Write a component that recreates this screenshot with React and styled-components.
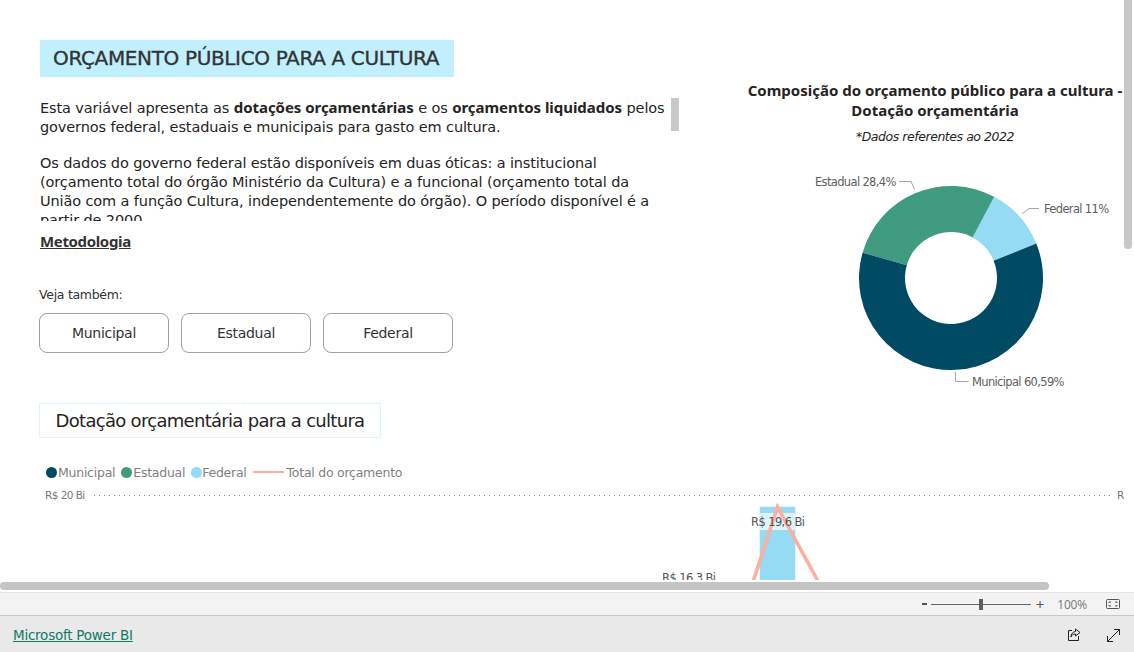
import React from "react";
import styled, { createGlobalStyle } from "styled-components";

const FONT = `"DejaVu Sans", "Noto Sans", sans-serif`;
const BOLD = `"Noto Sans", "DejaVu Sans", sans-serif`;

const Global = createGlobalStyle`
  html, body { margin: 0; padding: 0; background: #fff; overflow: hidden; }
  * { box-sizing: border-box; }
  body { font-family: ${FONT}; color: #252423; }
`;

const Page = styled.div`
  width: 1134px;
  height: 652px;
  display: flex;
  flex-direction: column;
  overflow: hidden;
`;
const Canvas = styled.main`
  position: relative;
  height: 592px;
  overflow: hidden;
  background: #fff;
`;
const Clip = styled.div`
  height: 580px;
  overflow: hidden;
  display: flex;
  flex-direction: column;
`;
const TopRow = styled.div`
  display: grid;
  grid-template-columns: 700px 434px;
  height: 403px;
`;
const LeftCol = styled.section`
  padding: 40px 0 0 40px;
  display: flex;
  flex-direction: column;
  align-items: flex-start;
`;
const MainTitle = styled.h1`
  margin: 0;
  width: 414px;
  height: 37px;
  padding-left: 13px;
  background: #c1efff;
  color: #333;
  font-size: 20px;
  font-weight: 400;
  letter-spacing: -0.35px;
  -webkit-text-stroke: 0.35px #333;
  line-height: 36px;
  white-space: nowrap;
`;
const TextBox = styled.div`
  position: relative;
  margin-top: 21px;
  padding-top: 1px;
  width: 639px;
  height: 123px;
  overflow: hidden;
  font-size: 14.5px;
  letter-spacing: -0.12px;
  line-height: 19px;
`;
const Para = styled.p`
  margin: 0 0 17px;
  width: 620px;
  white-space: nowrap;
`;
const Strong = styled.b`
  font-family: ${BOLD};
  font-size: 15px;
  letter-spacing: -0.04px;
  line-height: 1;
`;
const TextThumb = styled.div`
  position: absolute;
  right: 0;
  top: 0;
  width: 8px;
  height: 33px;
  background: #c8c8c8;
`;
const MethodLink = styled.a`
  margin-top: 10px;
  font-family: ${BOLD};
  font-size: 15px;
  letter-spacing: -0.35px;
  font-weight: 700;
  line-height: 20px;
  color: #333;
  text-decoration: underline;
`;
const SeeAlso = styled.div`
  margin-top: 35px;
  margin-left: -1px;
  font-size: 12.5px;
  letter-spacing: -0.3px;
  line-height: 18px;
  color: #333;
`;
const ButtonRow = styled.div`
  margin: 9px 0 0 -1px;
  display: flex;
  gap: 12px;
`;
const LinkButton = styled.button`
  width: 130px;
  height: 40px;
  background: #fff;
  border: 1px solid #a0a0a0;
  border-radius: 8px;
  font: 400 14px ${FONT};
  letter-spacing: -0.3px;
  color: #333;
`;
const RightCol = styled.section`
  padding-top: 81px;
  display: flex;
  flex-direction: column;
`;
const DonutTitle = styled.h2`
  margin: 0 0 0 35px;
  width: 400px;
  height: 40px;
  text-align: center;
  font-family: ${BOLD};
  font-size: 15px;
  font-weight: 700;
  line-height: 19.6px;
  white-space: nowrap;
`;
const DonutNote = styled.div`
  margin: 7px 0 -1px 35px;
  width: 400px;
  text-align: center;
  font-size: 12.5px;
  letter-spacing: -0.45px;
  font-style: italic;
  line-height: 18px;
`;
const DonutSvg = styled.svg`
  display: block;
  width: 434px;
  height: 258px;
`;
const ChartSection = styled.section`
  padding-left: 39px;
`;
const SectionTitle = styled.h2`
  margin: 0;
  width: 342px;
  height: 35px;
  border: 1px solid #dff3fa;
  font-size: 18px;
  letter-spacing: -0.7px;
  font-weight: 400;
  line-height: 33px;
  text-align: center;
  white-space: nowrap;
`;
const Legend = styled.div`
  margin: 25px 0 0 7px;
  display: flex;
  align-items: center;
  height: 18px;
  font-size: 12.5px;
  letter-spacing: -0.25px;
  color: #7f7f7f;
`;
const LegendItem = styled.span`
  display: flex;
  align-items: center;
  gap: ${(p) => p.$gap ?? 1}px;
  margin-right: 6px;
`;
const Dot = styled.i`
  width: 11px;
  height: 11px;
  border-radius: 50%;
  background: ${(p) => p.$c};
`;
const Dash = styled.i`
  width: 31px;
  height: 2px;
  margin-right: 2px;
  background: #ffad9e;
`;
const BarChart = styled.svg`
  display: block;
  width: 1134px;
  height: 99px;
  margin-left: -39px;
`;
const HScroll = styled.div`
  position: absolute;
  left: 0;
  top: 582px;
  width: 1049px;
  height: 8px;
  border-radius: 4px;
  background: #c4c4c4;
`;
const VScroll = styled.div`
  position: absolute;
  right: 2px;
  top: 0;
  width: 8px;
  height: 249px;
  border-radius: 0 0 4px 4px;
  background: #c8c8c8;
`;
const StatusBar = styled.div`
  height: 24px;
  background: #f3f3f3;
  border-top: 1px solid #e4e4e4;
  border-bottom: 1px solid #c8c8c8;
  display: flex;
  align-items: center;
  justify-content: flex-end;
  padding-right: 14px;
  font-family: "Open Sans", sans-serif;
  font-size: 12px;
  color: #777;
`;
const ZoomMinus = styled.span`
  width: 5px;
  height: 2px;
  background: #555;
  margin-right: 4px;
`;
const ZoomPlus = styled.span`
  font-size: 15px;
  line-height: 14px;
  color: #555;
`;
const Slider = styled.div`
  position: relative;
  width: 100px;
  height: 1px;
  margin-right: 5px;
  background: #666;
`;
const SliderThumb = styled.div`
  position: absolute;
  left: 48px;
  top: -5px;
  width: 4px;
  height: 11px;
  background: #605e5c;
`;
const ZoomValue = styled.span`
  margin: 0 19px 0 13px;
  letter-spacing: -0.2px;
`;
const Footer = styled.footer`
  flex: 1;
  background: #e9e9e9;
  display: flex;
  align-items: center;
  justify-content: space-between;
  padding: 2px 14px 0 13px;
`;
const BrandLink = styled.a`
  color: #117865;
  font-size: 13.5px;
  letter-spacing: -0.24px;
  text-decoration: underline;
`;
const FooterIcons = styled.div`
  display: flex;
  gap: 26px;
  align-items: center;
`;
const Icon = styled.svg`
  display: block;
`;

const polar = (cx, cy, r, a) => {
  const t = ((a - 90) * Math.PI) / 180;
  return [cx + r * Math.cos(t), cy + r * Math.sin(t)];
};
const slice = (a0, a1, cx, cy, ro = 92, ri = 46) => {
  const [x0, y0] = polar(cx, cy, ro, a0);
  const [x1, y1] = polar(cx, cy, ro, a1);
  const [x2, y2] = polar(cx, cy, ri, a1);
  const [x3, y3] = polar(cx, cy, ri, a0);
  const large = a1 - a0 > 180 ? 1 : 0;
  return `M${x0} ${y0}A${ro} ${ro} 0 ${large} 1 ${x1} ${y1}L${x2} ${y2}A${ri} ${ri} 0 ${large} 0 ${x3} ${y3}Z`;
};

const DonutChart = () => {
  const cx = 951;
  const cy = 278;
  return (
    <DonutSvg viewBox="700 145 434 258" role="img">
      <path d={slice(28, 68, cx, cy)} fill="#94dbf3" />
      <path d={slice(-74, 28, cx, cy)} fill="#3f9c80" />
      <path d={slice(68, 286, cx, cy)} fill="#004a63" />
      <g fill="none" stroke="#a6a6a6" strokeWidth="1">
        <path d="M899 181.500h12l3.500 8" />
        <path d="M1022 214l7-5.500h10" />
        <path d="M955.500 372v9.500h13" />
      </g>
      <g fontFamily={FONT} fontSize="11.500" letterSpacing="-0.65" fill="#605e5c">
        <text x="815" y="186">Estadual 28,4%</text>
        <text x="1044" y="213">Federal 11%</text>
        <text x="972" y="386">Municipal 60,59%</text>
      </g>
    </DonutSvg>
  );
};

const Chart = () => (
  <BarChart viewBox="0 481 1134 99" role="img">
    <g fontFamily={FONT} fontSize="10.500" letterSpacing="-0.55" fill="#777">
      <text x="45" y="499">R$ 20 Bi</text>
      <text x="1117" y="499">R</text>
    </g>
    <line x1="94" y1="495.500" x2="1110" y2="495.500" stroke="#888" strokeDasharray="1 4" />
    <rect x="759.500" y="506.500" width="36" height="74" fill="#94dbf3" stroke="#e3f6fc" />
    <rect x="760" y="513" width="35" height="17" fill="#fff" fillOpacity="0.7" />
    <path d="M753 582L777.500 507L818.500 582" fill="none" stroke="#ffad9e" strokeWidth="3.500" />
    <g fontFamily={FONT} fontSize="11.500" letterSpacing="-0.6" fill="#555">
      <text x="751" y="526">R$ 19,6 Bi</text>
      <text x="662" y="582">R$ 16,3 Bi</text>
    </g>
  </BarChart>
);

export default function App() {
  return (
    <Page>
      <Global />
      <Canvas>
        <Clip>
          <TopRow>
            <LeftCol>
              <MainTitle>ORÇAMENTO PÚBLICO PARA A CULTURA</MainTitle>
              <TextBox>
                <Para>
                  Esta variável apresenta as <Strong>dotações orçamentárias</Strong> e os{" "}
                  <Strong>orçamentos liquidados</Strong> pelos
                  <br />
                  governos federal, estaduais e municipais para gasto em cultura.
                </Para>
                <Para>
                  Os dados do governo federal estão disponíveis em duas óticas: a institucional
                  <br />
                  (orçamento total do órgão Ministério da Cultura) e a funcional (orçamento total da
                  <br />
                  União com a função Cultura, independentemente do órgão). O período disponível é a
                  <br />
                  partir de 2000.
                </Para>
                <TextThumb />
              </TextBox>
              <MethodLink>Metodologia</MethodLink>
              <SeeAlso>Veja também:</SeeAlso>
              <ButtonRow>
                <LinkButton>Municipal</LinkButton>
                <LinkButton>Estadual</LinkButton>
                <LinkButton>Federal</LinkButton>
              </ButtonRow>
            </LeftCol>
            <RightCol>
              <DonutTitle>
                Composição do orçamento público para a cultura -
                <br />
                Dotação orçamentária
              </DonutTitle>
              <DonutNote>*Dados referentes ao 2022</DonutNote>
              <DonutChart />
            </RightCol>
          </TopRow>
          <ChartSection>
            <SectionTitle>Dotação orçamentária para a cultura</SectionTitle>
            <Legend>
              <LegendItem><Dot $c="#004a63" />Municipal</LegendItem>
              <LegendItem><Dot $c="#3f9c80" />Estadual</LegendItem>
              <LegendItem $gap={0}><Dot $c="#94dbf3" />Federal</LegendItem>
              <LegendItem><Dash />Total do orçamento</LegendItem>
            </Legend>
            <Chart />
          </ChartSection>
        </Clip>
        <HScroll />
        <VScroll />
      </Canvas>
      <StatusBar>
        <ZoomMinus />
        <Slider><SliderThumb /></Slider>
        <ZoomPlus>+</ZoomPlus>
        <ZoomValue>100%</ZoomValue>
        <Icon width="14" height="10" viewBox="0 0 14 10" fill="none" stroke="#555">
          <rect x="0.500" y="0.500" width="13" height="9" rx="1" />
          <path d="M3 4V3h2M9 3h2v1M11 6v1H9M5 7H3V6" />
        </Icon>
      </StatusBar>
      <Footer>
        <BrandLink>Microsoft Power BI</BrandLink>
        <FooterIcons>
          <Icon width="14" height="14" viewBox="0 0 14 14" fill="none" stroke="#222">
            <path d="M5 2.500H1.500v10h10V8" />
            <path d="M8.500 1l4.500 3.500L8.500 8V6C6 6 4.500 7 4 9c0-3 1.500-5 4.500-5.500z" />
          </Icon>
          <Icon width="13" height="13" viewBox="0 0 13 13" fill="none" stroke="#222">
            <path d="M.5 12.500L12.500.5M7 .5h5.500V6M.5 7v5.500H6" />
          </Icon>
        </FooterIcons>
      </Footer>
    </Page>
  );
}
